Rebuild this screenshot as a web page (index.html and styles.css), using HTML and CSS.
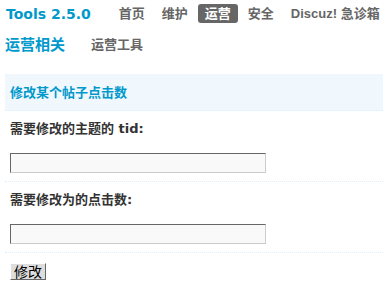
FILE: index.html
```html
<!DOCTYPE html>
<html lang="zh">
<head>
    <meta charset="UTF-8">
    <title>Tools 2.5.0</title>
    <link rel="stylesheet" href="styles.css">
</head>
<body>
    <div class="topbar">
        <span class="logo">Tools 2.5.0</span>
        <a class="nav-item" href="#">首页</a>
        <a class="nav-item" href="#">维护</a>
        <a class="nav-item active" href="#">运营</a>
        <a class="nav-item" href="#">安全</a>
        <a class="nav-item" href="#">Discuz! 急诊箱</a>
    </div>

    <div class="subnav">
        <span class="subnav-title">运营相关</span>
        <a class="subnav-item" href="#">运营工具</a>
    </div>

    <form class="tool-form" onsubmit="return false;">
        <div class="form-head">修改某个帖子点击数</div>

        <div class="form-label">需要修改的主题的 tid:</div>
        <div class="form-field">
            <input type="text" name="tid" class="input-text">
        </div>

        <div class="form-label">需要修改为的点击数:</div>
        <div class="form-field">
            <input type="text" name="views" class="input-text">
        </div>

        <div class="form-submit">
            <button type="submit" class="btn">修改</button>
        </div>
    </form>
</body>
</html>
```

FILE: styles.css
```css
body {
    margin: 0;
    padding: 0;
    background-color: #fff;
    font-family: "DejaVu Sans", "Noto Sans CJK SC", sans-serif;
    color: #333;
    overflow: hidden;
}

a {
    text-decoration: none;
}

.topbar {
    display: flex;
    align-items: center;
    height: 27px;
    padding-left: 6px;
    white-space: nowrap;
}

.logo {
    font-size: 14px;
    font-weight: bold;
    color: #09c;
    margin-right: 21px;
}

.nav-item {
    font-family: "Liberation Sans", "Noto Sans CJK SC", sans-serif;
    font-size: 13px;
    font-weight: bold;
    color: #666;
    line-height: 19px;
    padding: 0 7px;
    margin-right: 3px;
    border-radius: 3px;
}

.nav-item.active {
    background-color: #666;
    color: #fff;
}

.subnav {
    display: flex;
    align-items: center;
    height: 32px;
    padding-left: 5px;
    margin-bottom: 15px;
}

.subnav-title {
    font-size: 15px;
    font-weight: bold;
    color: #09c;
    margin-right: 26px;
}

.subnav-item {
    font-size: 13px;
    font-weight: bold;
    color: #666;
}

.tool-form {
    margin: 0 1px 0 5px;
}

.form-head {
    background-color: #f0f7fd;
    color: #09c;
    font-size: 13px;
    font-weight: bold;
    line-height: 16px;
    padding: 11px 5px 9px;
    border-bottom: 1px dotted #deeffb;
}

.form-label {
    font-size: 13px;
    font-weight: bold;
    line-height: 16px;
    padding: 10px 5px 0;
}

.form-field {
    padding: 16px 5px 8px;
    border-bottom: 1px dotted #deeffb;
}

.input-text {
    display: block;
    box-sizing: border-box;
    width: 256px;
    height: 20px;
    margin: 0;
    border: 1px solid;
    border-color: #666 #ccc #ccc #666;
    background-color: #f9f9f9;
}

.form-submit {
    padding: 9px 5px;
}

.btn {
    box-sizing: border-box;
    width: 36px;
    height: 17px;
    padding: 0;
    border: 1px solid;
    border-color: #fff #666 #666 #fff;
    background-color: #ddd;
    font-family: "Noto Sans CJK SC", sans-serif;
    font-size: 14px;
    line-height: 14px;
    color: #000;
}
```
